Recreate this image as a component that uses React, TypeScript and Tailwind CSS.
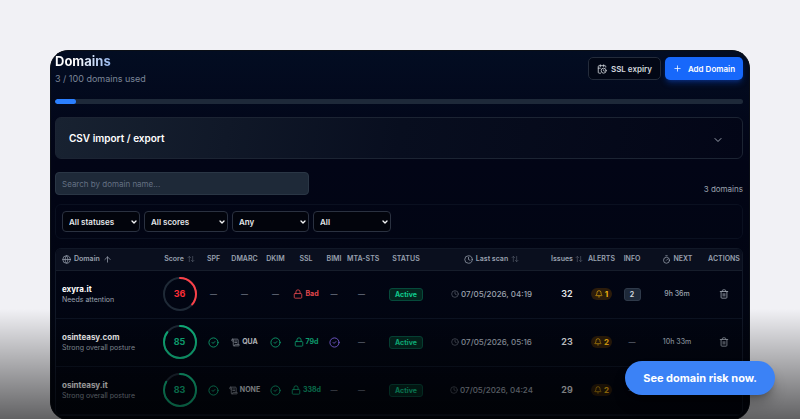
import React, { useState } from "react";
import {
  ArrowUp,
  ArrowUpDown,
  Bell,
  CalendarClock,
  ChevronDown,
  CircleCheck,
  Clock,
  Globe,
  Lock,
  Plus,
  ScrollText,
  Timer,
  Trash2,
} from "lucide-react";

type DomainRow = {
  name: string;
  note: string;
  score: number;
  spf: boolean;
  dmarc?: string;
  dkim: boolean;
  ssl: string;
  bimi: boolean;
  lastScan: string;
  issues: number;
  alerts: number;
  info?: number;
  next?: string;
};

const rows: DomainRow[] = [
  {
    name: "exyra.it",
    note: "Needs attention",
    score: 36,
    spf: false,
    dkim: false,
    ssl: "Bad",
    bimi: false,
    lastScan: "07/05/2026, 04:19",
    issues: 32,
    alerts: 1,
    info: 2,
    next: "9h 36m",
  },
  {
    name: "osinteasy.com",
    note: "Strong overall posture",
    score: 85,
    spf: true,
    dmarc: "QUA",
    dkim: true,
    ssl: "79d",
    bimi: true,
    lastScan: "07/05/2026, 05:16",
    issues: 23,
    alerts: 2,
    next: "10h 33m",
  },
  {
    name: "osinteasy.it",
    note: "Strong overall posture",
    score: 83,
    spf: true,
    dmarc: "NONE",
    dkim: true,
    ssl: "338d",
    bimi: false,
    lastScan: "07/05/2026, 04:24",
    issues: 29,
    alerts: 2,
  },
];

const Dash = () => <span className="text-[7px] font-semibold text-[#6b7280]">—</span>;

const Check = ({ className }: { className: string }) => (
  <CircleCheck size={11} className={`mx-auto ${className}`} />
);

const ScoreRing = ({ score }: { score: number }) => {
  const length = 2 * Math.PI * 16;
  const good = score >= 50;
  return (
    <div className="mx-auto grid size-[34px] place-items-center">
      <svg viewBox="0 0 34 34" className="col-start-1 row-start-1 size-full -rotate-90">
        <circle cx="17" cy="17" r="16" fill="none" stroke="#1f2a37" strokeWidth="2" />
        <circle
          cx="17"
          cy="17"
          r="16"
          fill="none"
          stroke={good ? "#10b981" : "#fb4048"}
          strokeWidth="2"
          strokeLinecap="round"
          strokeDasharray={`${(length * score) / 100} ${length}`}
        />
      </svg>
      <span
        className={`col-start-1 row-start-1 text-[9px] font-bold ${good ? "text-[#10b981]" : "text-[#fb2c36]"}`}
      >
        {score}
      </span>
    </div>
  );
};

const Filter = ({ label, value, width }: { label: string; value: string; width: string }) => (
  <div className={`grid items-center ${width}`}>
    <select
      aria-label={label}
      className="col-start-1 row-start-1 h-[21px] w-full appearance-none rounded border border-[#2a3140] bg-[#02040c] pl-[6px] text-[8px] font-semibold text-[#e5e7eb]"
    >
      <option>{value}</option>
    </select>
    <ChevronDown
      size={8}
      strokeWidth={4}
      className="pointer-events-none col-start-1 row-start-1 mr-[2px] justify-self-end text-[#f3f4f6]"
    />
  </div>
);

const App = () => {
  const [search, setSearch] = useState("");
  const used = 3;

  return (
    <main className="relative min-h-screen overflow-hidden bg-[#f1f1f5] px-[50px] pt-[50px] font-[Inter,sans-serif]">
      <section className="overflow-hidden rounded-[18px] border border-[#0b0f16] bg-[#020617] bg-linear-to-b from-[#030d22] via-[#020516] via-30% to-[#01050f] pr-[6px] pb-[3px] pl-1 text-[#9ca3af]">
        <header className="flex justify-between pt-[2px]">
          <div>
            <h1 className="w-fit bg-linear-to-r from-white from-40% to-[#93b4ea] bg-clip-text text-[13px] leading-4 font-bold text-transparent">
              Domains
            </h1>
            <p className="mt-1 text-[9px] leading-3 text-[#7b8698]">{used} / 100 domains used</p>
          </div>
          <div className="flex gap-1 pt-1">
            <button className="flex h-[23px] w-[73px] items-center justify-center gap-1 rounded-[5px] border border-[#242c3b] bg-[#020715] text-[8px] font-semibold text-[#d1d5db]">
              <CalendarClock size={10} />
              SSL expiry
            </button>
            <button className="flex h-[23px] w-[78px] items-center justify-center gap-[6px] rounded-[5px] bg-[#1768fb] text-[8px] font-semibold text-white shadow-md shadow-blue-600/30">
              <Plus size={9} />
              Add Domain
            </button>
          </div>
        </header>

        <div className="mt-[14px] h-[5px] overflow-hidden rounded-full bg-[#1e2939]">
          <div className="h-full rounded-full bg-[#2b7fff]" style={{ width: `${used}%` }} />
        </div>

        <button className="mt-[13px] flex h-[42px] w-full items-center justify-between rounded-md border border-[#1c2433] bg-linear-[100deg] from-[#182231] via-[#080e1f] via-50% to-[#030617] pr-[18px] pl-[13px] text-[10px] font-semibold text-white">
          CSV import / export
          <ChevronDown size={12} className="mt-1 text-[#9ca3af]" />
        </button>

        <div className="mt-[13px] flex items-end justify-between">
          <input
            type="text"
            aria-label="Search by domain name"
            placeholder="Search by domain name..."
            value={search}
            onChange={(e) => setSearch(e.target.value)}
            className="h-[23px] w-[254px] rounded border border-[#2a3645] bg-[#1e2938] px-[6px] text-[8px] text-white placeholder:text-[#647083]"
          />
          <p className="text-[8px] leading-3">3 domains</p>
        </div>

        <div className="mt-[9px] flex gap-1 rounded-md border border-[#0a1020] px-[6px] py-[6px]">
          <Filter label="Status" value="All statuses" width="w-[78px]" />
          <Filter label="Score" value="All scores" width="w-[84px]" />
          <Filter label="Alerts" value="Any" width="w-[77px]" />
          <Filter label="Type" value="All" width="w-[78px]" />
        </div>

        <div className="mt-[9px] overflow-hidden rounded-md border border-[#111827]">
          <table className="w-full table-fixed text-center text-[8px] whitespace-nowrap">
            <colgroup>
              <col />
              <col className="w-[37px]" />
              <col className="w-[31px]" />
              <col className="w-[31px]" />
              <col className="w-[31px]" />
              <col className="w-[30px]" />
              <col className="w-[26px]" />
              <col className="w-[29px]" />
              <col className="w-[60px]" />
              <col className="w-[111px]" />
              <col className="w-[40px]" />
              <col className="w-[29px]" />
              <col className="w-[32px]" />
              <col className="w-[58px]" />
              <col className="w-[36px]" />
            </colgroup>
            <thead className="bg-[#0a0f1e] text-[7px] text-[#99a1af]">
              <tr className="h-[21px] border-b border-[#161d2b] *:p-0 *:font-semibold">
                <th>
                  <span className="flex items-center gap-[3px] pl-[6px]">
                    <Globe size={9} />
                    Domain
                    <ArrowUp size={9} />
                  </span>
                </th>
                <th>
                  <span className="flex items-center justify-center gap-[3px]">
                    Score
                    <ArrowUpDown size={8} className="shrink-0 opacity-50" />
                  </span>
                </th>
                <th>SPF</th>
                <th>DMARC</th>
                <th>DKIM</th>
                <th>SSL</th>
                <th>BIMI</th>
                <th>MTA-STS</th>
                <th>STATUS</th>
                <th>
                  <span className="flex items-center justify-center gap-[3px]">
                    <Clock size={9} />
                    Last scan
                    <ArrowUpDown size={8} className="opacity-50" />
                  </span>
                </th>
                <th>
                  <span className="flex items-center justify-center gap-[2px]">
                    Issues
                    <ArrowUpDown size={8} className="shrink-0 opacity-50" />
                  </span>
                </th>
                <th>ALERTS</th>
                <th>INFO</th>
                <th>
                  <span className="flex items-center justify-center gap-[3px]">
                    <Timer size={9} />
                    NEXT
                  </span>
                </th>
                <th>ACTIONS</th>
              </tr>
            </thead>
            <tbody>
              {rows.map((row) => (
                <tr key={row.name} className="h-[48px] border-b border-[#0c1322] *:p-0">
                  <td className="text-left">
                    <div className="pl-[6px]">
                      <p className="text-[8px] leading-[12px] font-bold text-white">{row.name}</p>
                      <p className="text-[7px] leading-[10px]">{row.note}</p>
                    </div>
                  </td>
                  <td>
                    <ScoreRing score={row.score} />
                  </td>
                  <td>{row.spf ? <Check className="text-[#10b981]" /> : <Dash />}</td>
                  <td>
                    {row.dmarc ? (
                      <span className="flex items-center justify-center gap-[2px] text-[7px] font-bold text-[#d1d5db]">
                        <ScrollText size={9} className="shrink-0 text-[#9ca3af]" />
                        {row.dmarc}
                      </span>
                    ) : (
                      <Dash />
                    )}
                  </td>
                  <td>{row.dkim ? <Check className="text-[#10b981]" /> : <Dash />}</td>
                  <td>
                    <span
                      className={`flex items-center justify-center gap-[2px] text-[7px] font-bold ${row.ssl === "Bad" ? "text-[#e5484d]" : "text-[#10b981]"}`}
                    >
                      <Lock size={10} className="shrink-0" />
                      {row.ssl}
                    </span>
                  </td>
                  <td>{row.bimi ? <Check className="text-[#8b6cf6]" /> : <Dash />}</td>
                  <td>
                    <Dash />
                  </td>
                  <td>
                    <span className="inline-block rounded-[3px] border border-[#064a3b] bg-[#04261f] px-[5px] text-[7px] leading-[11px] font-bold text-[#10c98d]">
                      Active
                    </span>
                  </td>
                  <td>
                    <span className="flex items-center justify-center gap-[2px] text-[8px] font-medium">
                      <Clock size={8} className="opacity-60" />
                      {row.lastScan}
                    </span>
                  </td>
                  <td className="text-[9px] font-semibold text-[#e5e7eb]">{row.issues}</td>
                  <td>
                    <span className="mx-auto flex h-3 w-[21px] items-center justify-center gap-[2px] rounded-full bg-[#2c1c0b] text-[8px] font-bold text-[#f5b50f]">
                      <Bell size={8} />
                      {row.alerts}
                    </span>
                  </td>
                  <td>
                    {row.info ? (
                      <span className="inline-block w-[17px] rounded-[3px] border border-[#2f3a4a] bg-[#1e2939] text-[7px] leading-[11px] font-bold text-[#d1d5db]">
                        {row.info}
                      </span>
                    ) : (
                      <Dash />
                    )}
                  </td>
                  <td className="text-[7px] font-medium">{row.next ?? <Dash />}</td>
                  <td>
                    <button aria-label={`Delete ${row.name}`} className="mx-auto block">
                      <Trash2 size={10} />
                    </button>
                  </td>
                </tr>
              ))}
            </tbody>
          </table>
        </div>
      </section>

      <div className="pointer-events-none absolute inset-x-0 bottom-0 h-[111px] bg-linear-to-b from-transparent to-black/60" />
      <a
        href="#risk"
        className="absolute right-[25px] bottom-[25px] rounded-full bg-[#3b82f6] px-[18px] py-2 text-[11px] leading-[18px] font-bold text-white shadow-lg shadow-black/30"
      >
        See domain risk now.
      </a>
    </main>
  );
};

export default App;
